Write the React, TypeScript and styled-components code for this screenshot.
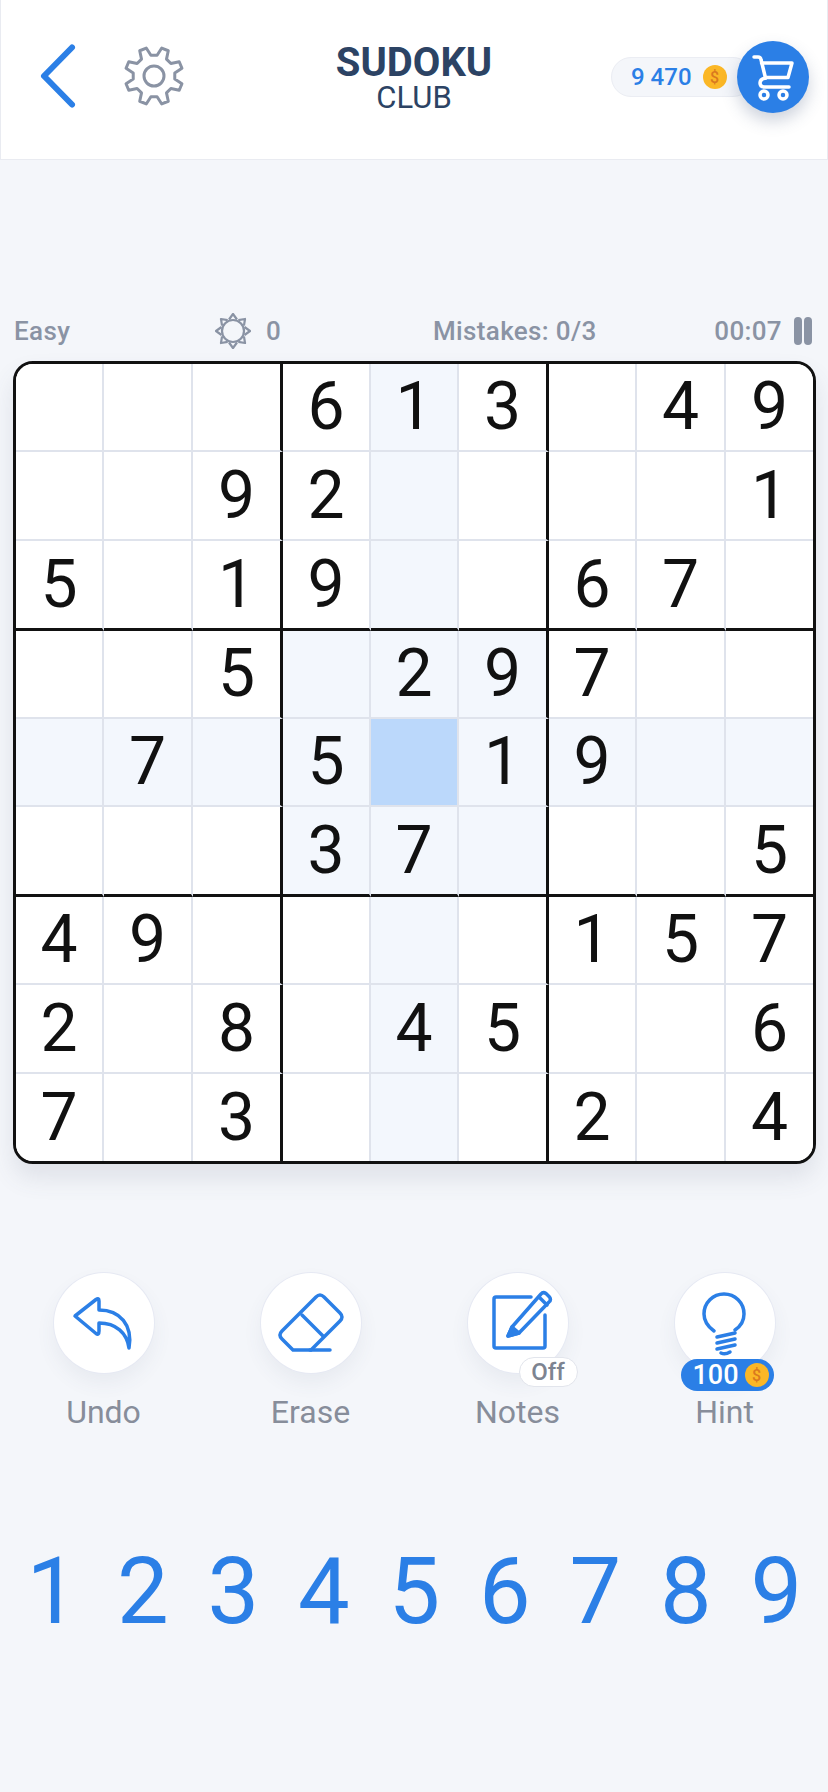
import React from "react";
import styled, { createGlobalStyle } from "styled-components";

const BLUE = "#2b7fe6";
const GREY = "#8a93a4";

const PUZZLE = [
  "...613.49",
  "..92....1",
  "5.19..67.",
  "..5.297..",
  ".7.5.19..",
  "...37...5",
  "49....157",
  "2.8.45..6",
  "7.3...2.4",
];

const SELECTED_ROW = 4;
const SELECTED_COL = 4;

// cell sizes include the line on their right/bottom side
const TRACKS = "88px 89px 90px 88px 88px 90px 88px 89px 87px";

const GlobalStyle = createGlobalStyle`
  html, body {
    margin: 0;
    padding: 0;
    background: #f4f6fa;
    font-family: Roboto, "Liberation Sans", sans-serif;
  }
  * {
    box-sizing: border-box;
  }
`;

function gearPath() {
  const cx = 32;
  const cy = 32;
  const points: string[] = [];
  for (let i = 0; i < 8; i++) {
    const mid = 22.5 + i * 45 - 90;
    const spots: [number, number][] = [
      [mid - 14, 21],
      [mid - 7, 29],
      [mid + 7, 29],
      [mid + 14, 21],
    ];
    spots.forEach(([deg, r]) => {
      const rad = (deg * Math.PI) / 180;
      points.push(`${(cx + r * Math.cos(rad)).toFixed(2)} ${(cy + r * Math.sin(rad)).toFixed(2)}`);
    });
  }
  return `M${points.join("L")}Z`;
}

function sunRays() {
  const rays: string[] = [];
  for (let i = 0; i < 8; i++) {
    const a = (i * 45 * Math.PI) / 180;
    const b = a + Math.PI / 2;
    const bx = 18 + 11.5 * Math.cos(a);
    const by = 18 + 11.5 * Math.sin(a);
    const tx = 18 + 17 * Math.cos(a);
    const ty = 18 + 17 * Math.sin(a);
    const p = (s: number) =>
      `${(bx + s * 4 * Math.cos(b)).toFixed(2)} ${(by + s * 4 * Math.sin(b)).toFixed(2)}`;
    rays.push(`M${p(-1)}L${tx.toFixed(2)} ${ty.toFixed(2)}L${p(1)}`);
  }
  return rays.join("");
}

function Coin() {
  return (
    <CoinBody>
      <span>$</span>
    </CoinBody>
  );
}

function Cell({ value, row, col }: { value: string; row: number; col: number }) {
  const sameBox =
    Math.floor(row / 3) === Math.floor(SELECTED_ROW / 3) &&
    Math.floor(col / 3) === Math.floor(SELECTED_COL / 3);
  const selected = row === SELECTED_ROW && col === SELECTED_COL;
  const related = row === SELECTED_ROW || col === SELECTED_COL || sameBox;
  return (
    <CellBox
      $tone={selected ? "selected" : related ? "related" : "plain"}
      $right={col === 8 ? "none" : col % 3 === 2 ? "thick" : "thin"}
      $bottom={row === 8 ? "none" : row % 3 === 2 ? "thick" : "thin"}
    >
      {value === "." ? "" : value}
    </CellBox>
  );
}

export default function App() {
  return (
    <Page>
      <GlobalStyle />
      <Header>
        <HeaderLeft>
          <svg width="44" height="70" viewBox="0 0 44 70">
            <path
              d="M36 6.500 L8 35 L36 63.500"
              fill="none"
              stroke={BLUE}
              strokeWidth="6"
              strokeLinecap="round"
              strokeLinejoin="round"
            />
          </svg>
          <svg width="64" height="64" viewBox="0 0 64 64">
            <path d={gearPath()} fill="none" stroke={GREY} strokeWidth="3" strokeLinejoin="round" />
            <circle cx="32" cy="32" r="10" fill="none" stroke={GREY} strokeWidth="3" />
          </svg>
        </HeaderLeft>
        <TitleBlock>
          <TitleMain>SUDOKU</TitleMain>
          <TitleSub>CLUB</TitleSub>
        </TitleBlock>
        <HeaderRight>
          <Wallet>
            <WalletAmount>9 470</WalletAmount>
            <Coin />
          </Wallet>
          <CartButton>
            <svg width="72" height="72" viewBox="0 0 72 72" fill="none" stroke="#fff" strokeWidth="3.5" strokeLinecap="round" strokeLinejoin="round">
              <path d="M17 16 H21 Q23.500 16 24 18.500 L28.500 37" />
              <path d="M24.500 22 H55 L51 36.500 H28.500" />
              <path d="M28.500 37 Q23 38 23 42 Q23 46 27.500 46 H52" />
              <circle cx="27" cy="54" r="4" />
              <circle cx="46" cy="54" r="4" />
            </svg>
          </CartButton>
        </HeaderRight>
      </Header>

      <StatusRow>
        <StatusText>Easy</StatusText>
        <StatusGroup>
          <svg width="36" height="36" viewBox="0 0 36 36" fill="none" stroke={GREY} strokeWidth="2.200" strokeLinejoin="round">
            <circle cx="18" cy="18" r="11" />
            <path d={sunRays()} />
          </svg>
          <StatusText>0</StatusText>
        </StatusGroup>
        <StatusText>Mistakes: 0/3</StatusText>
        <TimerGroup>
          <StatusText>00:07</StatusText>
          <Pause>
            <PauseBar />
            <PauseBar />
          </Pause>
        </TimerGroup>
      </StatusRow>

      <Board>
        {PUZZLE.map((line, row) =>
          line.split("").map((value, col) => <Cell key={`${row}-${col}`} value={value} row={row} col={col} />)
        )}
      </Board>

      <Actions>
        <Action>
          <RoundButton>
            <svg width="100" height="100" viewBox="0 0 100 100" fill="none" stroke={BLUE} strokeWidth="3.500" strokeLinecap="round" strokeLinejoin="round">
              <path d="M21 43 L42 26.500 Q45 24.500 45 28 V37 C66 37 79 52 75 75 C73 60 62 50 45 50 V58 Q45 62.500 42 60.500 Z" />
            </svg>
          </RoundButton>
          <ActionLabel>Undo</ActionLabel>
        </Action>
        <Action>
          <RoundButton>
            <svg width="100" height="100" viewBox="0 0 100 100" fill="none" stroke={BLUE} strokeWidth="3.500" strokeLinecap="round" strokeLinejoin="round">
              <path d="M55 24 Q59 20 63 24 L79 40 Q83 44 79 48 L50 77 H32 L21 66 Q17 62 21 58 Z" />
              <path d="M41 42 L62 63" />
              <path d="M49 77 H69" />
            </svg>
          </RoundButton>
          <ActionLabel>Erase</ActionLabel>
        </Action>
        <Action>
          <RoundButton>
            <svg width="100" height="100" viewBox="0 0 100 100" fill="none" stroke={BLUE} strokeWidth="3.500" strokeLinecap="round" strokeLinejoin="round">
              <path d="M63 24 H28 Q26 24 26 26 V73 Q26 75 28 75 H75 Q77 75 77 73 V42" />
              <path d="M44 54 L73 21 Q75 18.500 78 20.500 L81.500 24 Q83.500 27 81 29 L51 60 L40 63 Z" />
              <path d="M71 24 L79 32" />
              <path d="M40 63 L44 54 L51 60 Z" fill={BLUE} />
            </svg>
            <OffBadge>Off</OffBadge>
          </RoundButton>
          <ActionLabel>Notes</ActionLabel>
        </Action>
        <Action>
          <RoundButton>
            <svg width="100" height="100" viewBox="0 0 100 100" fill="none" stroke={BLUE} strokeWidth="3.500" strokeLinecap="round" strokeLinejoin="round">
              <path d="M39 58 C32 53 29 47 29 41 A20 20 0 1 1 69 41 C69 47 66 53 60 57" />
              <path d="M42 64 L60 60" />
              <path d="M42 70 L60 66" />
              <path d="M42 76 L60 72" />
              <path d="M46 80 Q50 82 55 79" />
            </svg>
            <HintBadge>
              <span>100</span>
              <Coin />
            </HintBadge>
          </RoundButton>
          <ActionLabel>Hint</ActionLabel>
        </Action>
      </Actions>

      <NumberPad>
        {[1, 2, 3, 4, 5, 6, 7, 8, 9].map((n) => (
          <PadKey key={n}>{n}</PadKey>
        ))}
      </NumberPad>
    </Page>
  );
}

const Page = styled.div`
  width: 828px;
  height: 1792px;
  overflow: hidden;
  background: #f4f6fa;
`;

const Header = styled.header`
  display: grid;
  grid-template-columns: 1fr auto 1fr;
  align-items: center;
  height: 160px;
  padding-bottom: 7px;
  background: #fff;
  border: 1px solid #e9ebf1;
  border-top: none;
`;

const HeaderLeft = styled.div`
  display: flex;
  align-items: center;
  gap: 42px;
  padding-left: 35px;
`;

const TitleBlock = styled.div`
  display: flex;
  flex-direction: column;
  align-items: center;
  padding-top: 8px;
  color: #2c4364;
`;

const TitleMain = styled.div`
  font-size: 40px;
  line-height: 35px;
  font-weight: 700;
`;

const TitleSub = styled.div`
  font-size: 31px;
  line-height: 35px;
  font-weight: 400;
`;

const HeaderRight = styled.div`
  display: flex;
  align-items: center;
  justify-content: flex-end;
  padding: 2px 18px 0 0;
`;

const Wallet = styled.div`
  display: flex;
  align-items: center;
  gap: 11px;
  width: 142px;
  height: 40px;
  margin-right: -16px;
  padding-left: 19px;
  background: #f4f6fa;
  border: 1px solid #ebedf3;
  border-radius: 20px;
`;

const WalletAmount = styled.span`
  color: ${BLUE};
  font-size: 24px;
  font-weight: 500;
`;

const CoinBody = styled.span`
  display: inline-flex;
  align-items: center;
  justify-content: center;
  flex: none;
  width: 24px;
  height: 24px;
  border-radius: 50%;
  background: #fbb726;
  color: #d9791f;
  font-size: 16px;
  font-weight: 500;
`;

const CartButton = styled.div`
  position: relative;
  flex: none;
  width: 72px;
  height: 72px;
  border-radius: 50%;
  background: ${BLUE};
  box-shadow: 0 8px 16px rgba(60, 80, 120, 0.25);
`;

const StatusRow = styled.div`
  display: grid;
  grid-template-columns: 201px 218px 279px 1fr;
  align-items: center;
  height: 40px;
  margin-top: 151px;
  padding: 0 16px 0 14px;
`;

const StatusText = styled.span`
  color: ${GREY};
  font-size: 26px;
  font-weight: 500;
  letter-spacing: 0.35px;
`;

const StatusGroup = styled.div`
  display: flex;
  align-items: center;
  gap: 15px;
`;

const TimerGroup = styled.div`
  display: flex;
  align-items: center;
  justify-content: flex-end;
  gap: 12px;
`;

const Pause = styled.div`
  display: flex;
  gap: 2px;
`;

const PauseBar = styled.div`
  width: 8px;
  height: 28px;
  border-radius: 4px;
  background: ${GREY};
`;

const Board = styled.div`
  display: grid;
  grid-template-columns: ${TRACKS};
  grid-template-rows: ${TRACKS};
  width: 803px;
  height: 803px;
  margin: 10px 0 0 13px;
  overflow: hidden;
  background: #fff;
  border: 3px solid #111;
  border-radius: 20px;
  box-shadow: 0 14px 24px rgba(70, 80, 110, 0.12);
`;

const lineStyle = (kind: "none" | "thin" | "thick") =>
  kind === "none" ? "0" : kind === "thick" ? "3px solid #111" : "2px solid #dfe3ec";

const CellBox = styled.div<{
  $tone: "plain" | "related" | "selected";
  $right: "none" | "thin" | "thick";
  $bottom: "none" | "thin" | "thick";
}>`
  display: flex;
  align-items: center;
  justify-content: center;
  min-width: 0;
  min-height: 0;
  background: ${(p) => (p.$tone === "selected" ? "#bbd8fb" : p.$tone === "related" ? "#f3f7fd" : "#fff")};
  border-right: ${(p) => lineStyle(p.$right)};
  border-bottom: ${(p) => lineStyle(p.$bottom)};
  color: #111;
  font-size: 66px;
  line-height: 1;
`;

const Actions = styled.div`
  display: grid;
  grid-template-columns: repeat(4, 1fr);
  margin-top: 109px;
`;

const Action = styled.div`
  display: flex;
  flex-direction: column;
  align-items: center;
  gap: 21px;
`;

const RoundButton = styled.div`
  position: relative;
  width: 100px;
  height: 100px;
  background: #fff;
  border-radius: 50%;
  box-shadow: 0 0 0 1px #e6e9f3, 0 10px 20px rgba(70, 80, 110, 0.07);
`;

const ActionLabel = styled.div`
  color: #878d9a;
  font-size: 32px;
  line-height: 36px;
`;

const OffBadge = styled.div`
  position: absolute;
  left: 51px;
  top: 84px;
  display: flex;
  align-items: center;
  justify-content: center;
  width: 59px;
  height: 30px;
  background: #fff;
  border: 1px solid #e2e5ec;
  border-radius: 15px;
  color: #7d8491;
  font-size: 24px;
  font-weight: 500;
`;

const HintBadge = styled.div`
  position: absolute;
  left: 6px;
  top: 86px;
  display: flex;
  align-items: center;
  gap: 6px;
  width: 93px;
  height: 32px;
  padding-left: 12px;
  background: ${BLUE};
  border-radius: 16px;
  color: #fff;
  font-size: 27px;
  font-weight: 500;
`;

const NumberPad = styled.div`
  display: grid;
  grid-template-columns: repeat(9, 90.5px);
  margin-top: 107px;
  padding-left: 7px;
`;

const PadKey = styled.div`
  color: ${BLUE};
  font-size: 92px;
  line-height: 110px;
  text-align: center;
`;
